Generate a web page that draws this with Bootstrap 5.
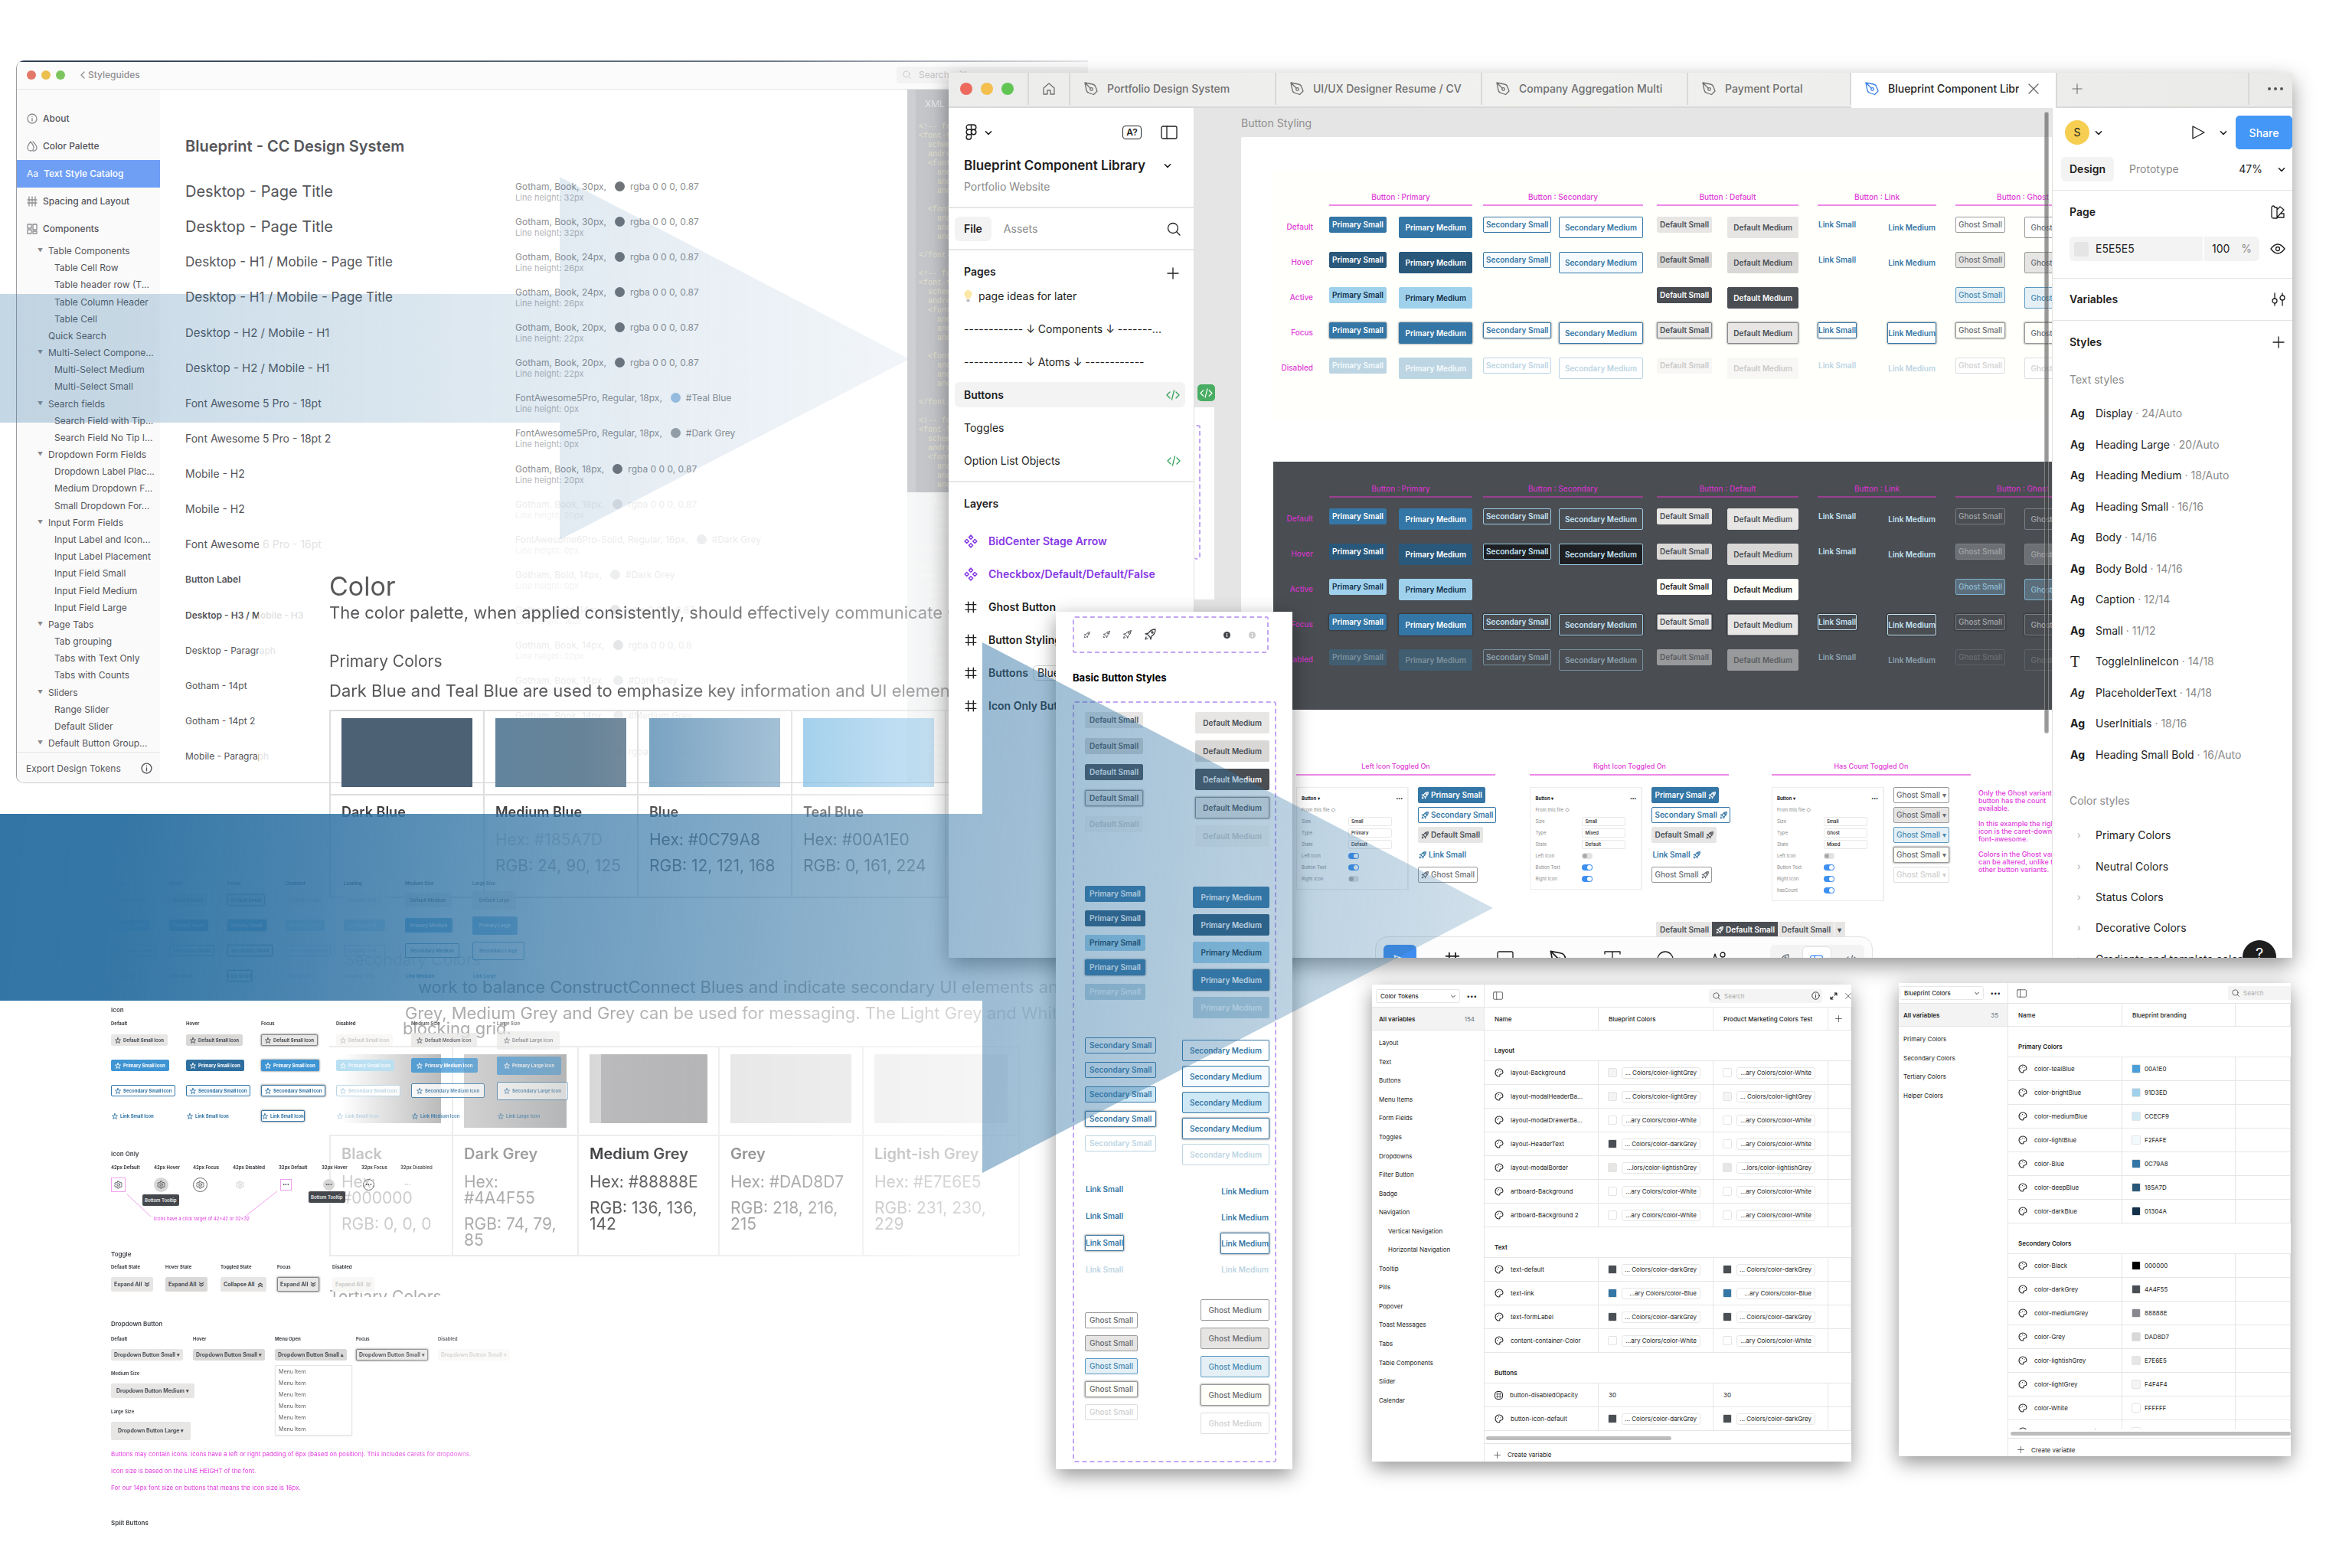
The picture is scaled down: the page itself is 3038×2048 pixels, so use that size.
<!DOCTYPE html>
<html lang="en">
<head>
<meta charset="utf-8">
<meta name="viewport" content="width=device-width, initial-scale=1">
<title>Blueprint Design System</title>
<link href="https://cdn.jsdelivr.net/npm/bootstrap@5.3.0/dist/css/bootstrap.min.css" rel="stylesheet">
<style>
body{font-family:Inter,"Noto Sans",sans-serif;font-size:14px;line-height:20px;color:#1e1e1e;background:#fff}
svg{display:block;flex:none}
.ic{fill:none;stroke:currentColor;stroke-width:1.3;stroke-linecap:round;stroke-linejoin:round}
.stage{position:relative;min-height:2048px;overflow:hidden}
.win{position:absolute;background:#fff}
.floaty{box-shadow:0 8px 24px rgba(0,0,0,.42)}
.nw{white-space:nowrap}
.fw-semi{font-weight:600}
a{color:inherit;text-decoration:none}
.light{border-radius:50%;flex:none}

/* style guide window */
.guide{left:21px;top:79px;width:1400px;height:944px;border-left:1px solid #9a9da1;border-bottom:1px solid #ccc;border-radius:10px 0 0 10px;overflow:hidden;color:#55555a}
.guide:before{content:"";position:absolute;inset:0 0 auto 0;height:2px;background:linear-gradient(90deg,#2c3e53,#6d7784 70%,#e5e7ea)}
.guide-bar{height:38px;background:#fbfbfb;border-bottom:1px solid #e4e4e4;padding:0 0 0 13px;font-size:12px;font-weight:500}
.guide-bar .light{width:12px;height:12px}
.guide-bar .lights{gap:7px}
.guide-search{width:250px;height:22px;background:#f3f3f3;color:#c2c2c2;font-size:12px;border-radius:3px}
.guide-search input{background:none;border:0;width:150px;font-size:12px;color:#c2c2c2}
.guide-search input::placeholder{color:#c4c4c4}
.side{width:187px;background:#fafafa;flex:none;padding-top:20px}
.side-main a{height:36px;padding-left:13px;gap:7px;font-size:12px;font-weight:500}
.side-main a svg{color:#8e8e92}
.side-main a.on{background:#6f9ff5;color:#fff}
.tree{height:665px}
.tree a{flex:1 1 0;display:flex;align-items:center;font-size:12px;padding-left:49px;white-space:nowrap}
.tree a.l1{padding-left:41px}
.tree a.par{padding-left:27px}
.tree a.par:before{content:"▼";font-size:7px;color:#8a8a8e;width:14px}
.export{border-top:1px solid #e6e6e6;height:42px;padding:0 10px 0 12px;font-size:12px}
.cat{padding:0 0 0 33px;flex:1}
.cat h1{font-size:20px;font-weight:600;line-height:26px;margin:61px 0 23px}
.cat-rows{height:784px}
.cat-row{flex:1 1 0;align-items:center;display:flex;white-space:nowrap}
.cat-row .nm{width:431px;flex:none}
.t20{font-size:20px}.t17{font-size:17px}.t15{font-size:15px}.t14{font-size:14px}.t12{font-size:12px}
.spec1{font-size:12px;line-height:15px;color:#8d8f93;gap:7px}
.spec1 i{width:13px;height:13px;border-radius:50%;background:#707378;margin-left:4px}
.spec1 i.teal{background:#a0c4e6}.spec1 i.dg{background:#9da2a6}
.spec2{font-size:11px;line-height:14px;color:#b4b6ba}
.code{width:236px;flex:none;background:linear-gradient(90deg,#cdcfd2 0,#cdcfd2 11px,#c4c6ca 11px,#bdbfc4);color:#e3e0cb;font:10px/12px "Liberation Mono",monospace;padding:9px 0 0 15px;white-space:pre}
.code h6{font:12px/20px Inter,sans-serif;color:#e9eaec;margin:0 0 14px 8px}
.veil{position:absolute;left:316px;top:564px;right:0;bottom:0;background:rgba(255,255,255,.82)}

/* colour documentation */
.doc{position:absolute;left:430px;top:741px;width:950px;height:953px;overflow:hidden;color:#58585b;font-size:22px;line-height:20px;white-space:nowrap;-webkit-mask-image:linear-gradient(90deg,#000 35%,rgba(0,0,0,.35));mask-image:linear-gradient(90deg,#000 35%,rgba(0,0,0,.35))}
.doc h2{font-size:34px;line-height:50px;font-weight:400;margin:0}
.doc h3{font-size:21px;line-height:30px;font-weight:400;margin:0}
.doc p{margin:0}
.doc table{border-collapse:collapse;white-space:normal;table-layout:fixed;font-size:21px}
.doc td{border:2px solid #dedede;padding:9px 14px;vertical-align:top}
.doc .greys td{border-color:#ececec}
.pal td{width:201px}
.sw{height:90px}
.doc .nmr b{display:block;font-size:18px;line-height:22px;font-weight:600;color:#3f3f42}
.doc .greys .nmr b{font-size:20px}
.pal .swr td{height:110px}.pal .nmr td{height:134px}
.pal .nmr b{margin:2px 0 13px}.pal .nmr p{line-height:24px;margin-bottom:10px;white-space:nowrap}
.greys .swr td{height:115px}.greys .nmr td{height:156px}
.greys .nmr b{margin:3px 0 15px}.greys .nmr p{line-height:21px;margin-bottom:13px}
.greys .nmr p:last-child{margin-bottom:0}
.f0{opacity:.22}.f1{opacity:.3}.f2{opacity:.5}.f3{opacity:.7}

/* button sheet */
.sheet{position:absolute;left:145px;top:1149px;width:620px;color:#3f4247;font-size:6px;line-height:10px;-webkit-mask-image:linear-gradient(90deg,#000 50%,rgba(0,0,0,.45));mask-image:linear-gradient(90deg,#000 50%,rgba(0,0,0,.45))}
.sheet h4{font-size:8px;line-height:12px;font-weight:600;margin:0}
.sheet .cols{display:grid;font-weight:700}
.c76{grid-template-columns:76px 76px 76px 76px 80px 88px 100px}
.c98{grid-template-columns:98px 98px 98px 98px 112px 110px}
.cio{grid-template-columns:56px 51px 52px 60px 56px 52px 51px 60px}
.c71{grid-template-columns:71px 72px 74px 72px 80px}
.c107{grid-template-columns:107px 107px 106px 107px 107px}
.r33{grid-auto-rows:33px;align-items:center;justify-items:start}
.pink{color:#e23ae0;font-size:8px;line-height:10px;margin:0;white-space:nowrap}
.iconly{position:relative;height:102px}
.iconly .cell{width:19px;height:34px;display:flex;align-items:center;justify-content:center}
.ring{width:19px;height:19px;border-radius:50%;display:flex;align-items:center;justify-content:center}
.ring.h{background:#d8d7d6}.ring.f{border:1px solid #666}.ring.sq{border:1px solid #f0a0ef;border-radius:0}.ring.d{opacity:.3}
.ring.sm{width:15px;height:15px}
.tip{position:absolute;background:#44474c;color:#fff;border-radius:2px;line-height:15px;padding:0 3px;font-weight:500}
.ddmenu{position:absolute;left:214px;top:21px;width:101px;background:#fff;border:1px solid #e4e4e4;padding:0 4px;line-height:15px;box-shadow:0 1px 2px rgba(0,0,0,.08);color:#777;font-weight:500;font-size:7px}

/* buttons */
.bt{--bs-btn-padding-x:3px;--bs-btn-padding-y:0px;--bs-btn-font-size:10px;--bs-btn-font-weight:600;--bs-btn-border-radius:2px;--bs-btn-line-height:19px;white-space:nowrap;display:inline-flex;align-items:center;justify-content:center;gap:3px;flex:none}
.bt.md{--bs-btn-padding-x:7px;--bs-btn-line-height:26px}
.bt svg{width:10px;height:10px;stroke-width:1.8}
.sheet .bt{--bs-btn-font-size:6px;--bs-btn-font-weight:700;--bs-btn-line-height:13px;--bs-btn-padding-x:4px}
.sheet .bt.md{--bs-btn-line-height:17px;--bs-btn-padding-x:6px}
.sheet .bt.lg{--bs-btn-line-height:22px;--bs-btn-padding-x:8px}
.sheet .big.bt,.sheet .big .bt{--bs-btn-font-size:7px}
.sheet .big .bt{--bs-btn-padding-x:3px}
.sheet .bt svg{width:8px;height:8px}
.k-pri{--bs-btn-bg:#3476a5;--bs-btn-color:#fff;--bs-btn-border-color:#3476a5}
.k-pri.s-h{--bs-btn-bg:#2a587b;--bs-btn-border-color:#2a587b}
.k-pri.s-a{--bs-btn-bg:#a0d1ec;--bs-btn-border-color:#a0d1ec;--bs-btn-color:#12304a}
.k-pri.s-d{--bs-btn-bg:#bdd5e2;--bs-btn-border-color:#bdd5e2;--bs-btn-color:#f4fafd}
.sheet .k-pri{--bs-btn-bg:#3f95d3;--bs-btn-border-color:#3f95d3}
.sheet .k-pri.s-h{--bs-btn-bg:#2f6f9f;--bs-btn-border-color:#2f6f9f}
.sheet .k-pri.s-d{--bs-btn-bg:#b8dff2;--bs-btn-border-color:#b8dff2}
.k-sec{--bs-btn-bg:#fff;--bs-btn-color:#3476a5;--bs-btn-border-color:#3476a5}
.k-sec.s-h{--bs-btn-bg:#f4faff}.k-sec.s-a{--bs-btn-bg:#cfe8f6}
.k-sec.s-d{--bs-btn-color:#bcd5e3;--bs-btn-border-color:#bcd5e3}
.k-def{--bs-btn-bg:#e7e6e5;--bs-btn-color:#4a4f55;--bs-btn-border-color:#e7e6e5}
.k-def.s-h{--bs-btn-bg:#dad8d7;--bs-btn-border-color:#dad8d7}
.k-def.s-a{--bs-btn-bg:#4a4d52;--bs-btn-border-color:#4a4d52;--bs-btn-color:#fff}
.k-def.s-f{--bs-btn-border-color:#85878b}
.k-def.s-d{--bs-btn-bg:#f8f7f5;--bs-btn-border-color:#f8f7f5;--bs-btn-color:#c9c9c9}
.k-lnk{--bs-btn-bg:transparent;--bs-btn-color:#3476a5;--bs-btn-border-color:transparent;--bs-btn-padding-x:0px!important}
.k-lnk.s-f{--bs-btn-border-color:#3476a5;--bs-btn-bg:#fff}
.k-lnk.s-d{--bs-btn-color:#bcd5e3}
.k-gho{--bs-btn-bg:#fff;--bs-btn-color:#6a6d72;--bs-btn-border-color:#999;--bs-btn-font-weight:500}
.k-gho.s-h{--bs-btn-bg:#e6e5e4}.k-gho.s-a{--bs-btn-bg:#e4f0f6;--bs-btn-color:#4a8ab3;--bs-btn-border-color:#5b9ac2}
.k-gho.s-f{--bs-btn-bg:#fffffa}.k-gho.s-d{--bs-btn-color:#cfcfcf;--bs-btn-border-color:#dedede}
.s-f{box-shadow:0 0 2px 1px rgba(0,0,0,.28)}
.night .k-sec{--bs-btn-bg:transparent;--bs-btn-color:#c5e3f3;--bs-btn-border-color:#9dcbe4}
.night .k-sec.s-h{--bs-btn-bg:#1d1f22}.night .k-sec.s-d{--bs-btn-color:#8da3b0;--bs-btn-border-color:#75909f}
.night .k-lnk{--bs-btn-color:#c5e3f3}.night .k-lnk.s-f{--bs-btn-bg:transparent;--bs-btn-border-color:#c5e3f3}
.night .k-lnk.s-d{--bs-btn-color:#8da3b0}
.night .k-pri.s-d{--bs-btn-bg:#415d70;--bs-btn-border-color:#415d70;--bs-btn-color:#7e919d}
.night .k-def.s-a{--bs-btn-bg:#fffffa;--bs-btn-border-color:#fffffa;--bs-btn-color:#222}
.night .k-def.s-d{--bs-btn-bg:#98999b;--bs-btn-border-color:#98999b;--bs-btn-color:#5a5d61}
.night .k-gho{--bs-btn-bg:transparent;--bs-btn-color:#a3a5a8;--bs-btn-border-color:#7b7e82}
.night .k-gho.s-h{--bs-btn-bg:#6d7074}.night .k-gho.s-a{--bs-btn-bg:#5b6e7b;--bs-btn-color:#8fbdd6;--bs-btn-border-color:#7fb2cf}
.night .k-gho.s-d{--bs-btn-color:#6a6d71;--bs-btn-border-color:#5e6165}

/* editor */
.editor{left:1239px;right:44px;top:95px;height:1156px;overflow:hidden;box-shadow:0 10px 26px rgba(0,0,0,.42)}
.tabs{height:46px;background:linear-gradient(90deg,#ececeb,#f1f1ef 45%,#eaeae8);border-bottom:2px solid #d9d9d9;color:#6f6f6f;font-weight:500}
.tabs>*{border-right:2px solid #d9d9d9;height:42px;flex:none}
.tabs .tb{width:269px;padding:0 14px 0 18px;gap:12px;overflow:hidden;white-space:nowrap}
.tabs .tb span{overflow:hidden}
.tabs .tb.pp{width:213px}
.tabs .tb.on{background:#fff;color:#1e1e1e;height:46px;padding-bottom:4px}
.tabs .cut{width:171px}
.lp{width:321px;flex:none;border-right:1px solid #e0e0e0;background:#fff}
.lp .ln{border-top:2px solid #e6e6e6}
.lp .it{height:43px;padding:0 17px 0 20px;white-space:nowrap}
.pill{background:#f3f3f3;border-radius:6px}
.tagbox{border:1px solid #d5d5d5;border-radius:5px;padding:0 5px;font-weight:400;margin-left:-8px;line-height:18px}
.canvas{background:#e5e5e5;position:relative;overflow:hidden;flex:1 1 0;min-width:0}
.frame{position:absolute;left:61px;top:38px;right:0;bottom:0;background:#fff;border-radius:3px 0 0 0;overflow:hidden}
.matrix{height:324px;margin-left:42px;padding-top:29px;overflow:hidden}
.day{background:#fffffc}
.night{background:#4a4d52}
.matrix .lab{width:52px;padding-top:22px;text-align:right;flex:none}
.matrix .lab span,.matrix .cap{color:#e03cd6;font-size:10px;font-weight:500}
.matrix.night .lab span,.matrix.night .cap{color:#cf35c6}
.matrix .lab span{display:block;height:46px;line-height:46px}
.grp{flex:none}
.cap{text-align:center;line-height:12px;border-bottom:2px solid #ee8ae6;padding-bottom:4px;margin-bottom:14px;white-space:nowrap}
.night .cap{border-color:#99408f}
.grp .rw{height:46px;display:flex;justify-content:space-between;align-items:flex-start}
.g1{width:187px;margin-left:21px}.g2{width:209px;margin-left:14px}.g3{width:185px;margin-left:18px}.g4{width:155px;margin-left:25px}.g5{width:176px;margin-left:25px}
.trio{padding:68px 0 0 72px}
.trio .cap{width:260px;color:#e03cd6;font-size:9px;font-weight:500;margin-bottom:15px}
.trio .stack{display:flex;flex-direction:column;gap:5px;align-items:flex-start}
.prop{width:146px;border:1px solid #ececec;padding:6px;font-size:6px;line-height:10px;color:#8b8b8b;flex:none;box-shadow:1px 0 1px rgba(0,0,0,.05)}
.prop>div{height:15px;display:flex;align-items:center}
.prop label{width:61px}
.prop select{appearance:none;border:1px solid #e8e8e8;border-radius:2px;width:57px;height:12px;font-size:6px;line-height:9px;padding:0 3px;background:#fff;color:#222;font-weight:500}
.prop .form-check-input{width:14px;height:8px;margin:0;min-height:0;border:0;background-color:#e3e3e3;background-size:contain}
.prop .form-check-input:checked{background-color:#3d8ff0}
.prop .form-switch{padding:0;min-height:0;margin:0;display:flex}
.split{position:absolute;left:603px;top:1063px}
.split .bt{border-radius:0;--bs-btn-line-height:19px;--bs-btn-padding-x:4px}
.toolb{position:absolute;left:236px;top:1082px;width:650px;height:60px;border-radius:16px;background:#fcfcfc;border:1px solid #e3e3e3;padding:10px}
.toolb .blue{width:43px;height:43px;background:#3f8df0;border-radius:6px;color:#fff}
.scrl{position:absolute;right:4px;top:5px;width:6px;height:812px;border-radius:3px;background:rgba(70,70,70,.55);border:1px solid rgba(255,255,255,.3)}
.rp{width:314px;flex:none;border-left:1px solid #e0e0e0;background:#fff}
.rp .sec{border-top:1px solid #e3e3e3;padding:0 16px 0 22px;font-weight:600}
.rp .sty{flex:1 1 0;display:flex;align-items:center;white-space:nowrap}
.rp .sty b{width:33px;font-weight:600}
.rp .mut{color:#8a8a8a}
.rp .stylist{height:486px;padding-left:23px}
.rp .clist{height:202px;padding-left:32px}
.rp .clist span{width:24px;color:#aaa;font-size:12px}
.help{position:absolute;right:21px;bottom:-21px;width:44px;height:44px;border-radius:50%;background:#1e1e1e;color:#fff;text-align:center;font-size:20px;line-height:36px}
.avatar{width:32px;height:32px;border-radius:50%;background:#f6ce52;text-align:center;line-height:32px}
.share{--bs-btn-bg:#4597f7;--bs-btn-color:#fff;--bs-btn-border-color:#4597f7;--bs-btn-font-size:14px;--bs-btn-font-weight:500;--bs-btn-padding-x:0px;--bs-btn-padding-y:0px;width:74px;height:44px;border-radius:5px}

/* basic buttons panel */
.basic{left:1379px;top:799px;width:309px;height:1120px;padding:6px 21px 0 22px}
.dash{border:2px dashed #c3a5f3;border-radius:3px}
.basic h5{font-size:13px;font-weight:700;line-height:20px;margin:22px 0 21px;color:#000}
.colm{display:flex;flex-direction:column}
.colm>div{display:flex;flex-direction:column}
.basic .bt{--bs-btn-padding-x:5px}.basic .bt.md{--bs-btn-padding-x:9px}
.L>div{align-items:flex-start}.R>div{align-items:flex-end}

/* variables panels */
.vars{font-size:8px;line-height:12px}
.vars .ic{stroke-width:1.1}
.vars .vh{border-bottom:1px solid #e6e6e6}
.vars .vs{flex:none;border-right:1px solid #e6e6e6}
.vars .av{background:#f3f3f3;border-bottom:1px solid #e6e6e6;font-weight:600;padding:0 12px 0 9px}
.vars select,.vars input{border:1px solid #e6e6e6;border-radius:3px;background:#fff;font-size:8px;height:18px;padding:0 5px;line-height:12px}
.pick{position:relative}
.pick select{appearance:none;width:110px}
.pick svg{position:absolute;right:5px;top:5px}
.vars input{background:#f4f4f4;border:0}
.vars input::placeholder{color:#aaa}
.vars .lst{padding:4px 9px 0}
.vars .lst a{flex:1 1 0;display:flex;align-items:center}
.vars table{border-collapse:separate;border-spacing:0;table-layout:fixed;width:100%}
.vars td,.vars th{height:31px;border-bottom:1px solid #e6e6e6;border-right:1px solid #e6e6e6;padding:0 0 0 13px;white-space:nowrap;font-weight:400;overflow:hidden}
.vars th{height:30px;font-weight:500}
.vars td.sct{height:40px;font-weight:600;vertical-align:bottom;padding-bottom:7px;border-right:0}
.vars .sq{width:12px;height:12px;border-radius:2px;border:1px solid #e4e4e4;flex:none}
.vars .al{border:1px solid #e6e6e6;border-radius:3px;width:103px;height:15px;line-height:13px;text-align:right;padding-right:4px}
.dots{font-size:8px}
.bar{height:5px;border-radius:3px;background:#bcbcbc}
.arrows{position:absolute;left:0;top:0;pointer-events:none}
</style>
</head>
<body>
<svg width="0" height="0" class="position-absolute" aria-hidden="true">
<symbol id="pen" viewBox="0 0 18 18"><path d="M1 1l10 2q3 .500 4 3.500l2 5.500-4.500 4.500-6-2q-3-1-3.500-3.500zM1 1l7 7"/><circle cx="9.500" cy="9.500" r="1.800"/></symbol>
<symbol id="home" viewBox="0 0 18 18"><path d="M2 8l7-6 7 6v8h-5v-5H7v5H2z"/></symbol>
<symbol id="fig" viewBox="0 0 16 20"><path d="M8 1H5a3 3 0 000 6h3zM8 1h3a3 3 0 010 6H8zM8 7H5a3 3 0 000 6h3zM8 13H5a3 3 0 103 3z"/><circle cx="11" cy="10" r="3"/></symbol>
<symbol id="chev" viewBox="0 0 10 10"><path d="M2 4l3 3 3-3"/></symbol>
<symbol id="pnl" viewBox="0 0 22 18"><rect x="1" y="1" width="20" height="16" rx="2"/><path d="M8 1v16"/></symbol>
<symbol id="mag" viewBox="0 0 18 18"><circle cx="8" cy="8" r="6.500"/><path d="M13 13l4 4"/></symbol>
<symbol id="plus" viewBox="0 0 16 16"><path d="M8 1v14M1 8h14"/></symbol>
<symbol id="dev" viewBox="0 0 18 14"><path d="M5 3L1 7l4 4M13 3l4 4-4 4M10.500 1l-3 12"/></symbol>
<symbol id="comp" viewBox="0 0 16 16"><path d="M8 1l2.300 2.300L8 5.600 5.700 3.300zM8 10.400l2.300 2.300L8 15l-2.300-2.300zM3.300 5.700L5.600 8l-2.300 2.300L1 8zM12.700 5.700L15 8l-2.300 2.300L10.400 8z"/></symbol>
<symbol id="hash" viewBox="0 0 16 16"><path d="M5 2v12M11 2v12M2 5h12M2 11h12"/></symbol>
<symbol id="star" viewBox="0 0 16 16"><path d="M8 1l2 5h5l-4 3.500L12.500 15 8 11.500 3.500 15 5 9.500 1 6h5z"/></symbol>
<symbol id="rkt" viewBox="0 0 16 16"><path d="M15 1q-6 0-9 5L2 7l3 1 3 3 1 3 1-4q5-3 5-9zM3 11l-1 3 3-1"/><circle cx="11" cy="5" r="1"/></symbol>
<symbol id="gear" viewBox="0 0 16 16"><circle cx="8" cy="8" r="2.500"/><path d="M6.500 1.500h3l.5 2 1.500.8 2-.6 1.500 2.600-1.500 1.700 1.500 1.700-1.500 2.600-2-.6-1.500.8-.5 2h-3l-.5-2-1.500-.8-2 .6L1 9.700 2.500 8 1 6.300l1.500-2.600 2 .6L6 3.500z"/></symbol>
<symbol id="pal" viewBox="0 0 12 12"><path d="M6 1a5 5 0 100 10c1.500 0 .5-1.500 1-2.500s3.500.2 4-2.500C11 3 9 1 6 1z"/><path d="M3.500 5.500v.1M5.500 3.500v.1M8 4.200v.1"/></symbol>
<symbol id="info" viewBox="0 0 14 14"><circle cx="7" cy="7" r="6"/><path d="M7 6.500v3.500M7 4v.2"/></symbol>
<symbol id="dbl" viewBox="0 0 12 12"><path d="M2 2l4 3 4-3M2 6l4 3 4-3"/></symbol>
<symbol id="dblup" viewBox="0 0 12 12"><path d="M2 6l4-3 4 3M2 10l4-3 4 3"/></symbol>
</svg>

<main class="stage">

<section class="win guide" aria-label="Style guide">
  <header class="guide-bar d-flex align-items-center">
    <div class="lights d-flex"><span class="light" style="background:#e27868"></span><span class="light" style="background:#ecc04f"></span><span class="light" style="background:#7cc55d"></span></div>
    <a href="#" class="d-flex align-items-center ms-3" style="color:#8e8e92"><svg class="ic" width="14" height="14" viewBox="0 0 14 14"><path d="M9 3L5 7l4 4"/></svg>Styleguides</a>
    <label class="guide-search d-flex align-items-center ms-auto px-2 gap-2"><svg class="ic" width="11" height="11"><use href="#mag"/></svg><input placeholder="Search with..." aria-label="Search"></label>
  </header>
  <div class="d-flex">
    <nav class="side">
      <div class="side-main">
        <a href="#" class="d-flex align-items-center"><svg class="ic" width="14" height="14"><use href="#info"/></svg>About</a>
        <a href="#" class="d-flex align-items-center"><svg class="ic" width="14" height="14" viewBox="0 0 14 14"><path d="M5 1Q1 6 1 9a4 4 0 008 0Q9 6 5 1zM8 1q5 5 5 8a4 4 0 01-5 4"/></svg>Color Palette</a>
        <a href="#" class="d-flex align-items-center on"><span style="font-weight:400">Aa</span>Text Style Catalog</a>
        <a href="#" class="d-flex align-items-center"><svg class="ic" width="14" height="14" viewBox="0 0 14 14"><path d="M3 1v12M7 1v12M11 1v12M1 5h12M1 9h12"/></svg>Spacing and Layout</a>
        <a href="#" class="d-flex align-items-center"><svg class="ic" width="14" height="14" viewBox="0 0 14 14"><path d="M1 1h5v5H1zM8 1h5v7H8zM1 8h5v5H1zM8 10h5v3H8z"/></svg>Components</a>
      </div>
      <div class="tree d-flex flex-column" id="tree"></div>
      <div class="export d-flex align-items-center justify-content-between">Export Design Tokens<svg class="ic" width="15" height="15"><use href="#info"/></svg></div>
    </nav>
    <div class="cat">
      <h1>Blueprint - CC Design System</h1>
      <div class="cat-rows d-flex flex-column" id="cat"></div>
    </div>
    <div class="code"><h6>XML</h6><span id="code"></span></div>
  </div>
  <div class="veil"></div>
</section>

<section class="doc">
  <h2>Color</h2>
  <p style="line-height:18px">The color palette, when applied consistently, should effectively communicate ConstructConnect</p>
  <h3 style="margin-top:40px">Primary Colors</h3>
  <p style="margin:13px 0 15px">Dark Blue and Teal Blue are used to emphasize key information and UI elements.</p>
  <table class="pal" style="width:1005px">
    <tr class="swr"><td><div class="sw" style="background:#4d6175"></div></td><td><div class="sw" style="background:linear-gradient(90deg,#62859d,#6a8396)"></div></td><td><div class="sw" style="background:linear-gradient(90deg,#6c9abc,#82a9c6)"></div></td><td><div class="sw" style="background:linear-gradient(90deg,#7dbce4,#94c8ea)"></div></td><td></td></tr>
    <tr class="nmr"><td><b>Dark Blue</b></td><td><b>Medium Blue</b><p class="f1">Hex: #185A7D</p><p class="f2">RGB: 24, 90, 125</p></td><td><b>Blue</b><p>Hex: #0C79A8</p><p>RGB: 12, 121, 168</p></td><td><b>Teal Blue</b><p>Hex: #00A1E0</p><p>RGB: 0, 161, 224</p></td><td></td></tr>
  </table>
  <h3 class="f0" style="margin-top:66px;padding-left:20px">Secondary Colors</h3>
  <p class="f3" style="margin-top:10px;padding-left:116px">work to balance ConstructConnect Blues and indicate secondary UI elements and</p>
  <p class="f2" style="margin-top:14px;padding-left:99px">Grey, Medium Grey and Grey can be used for messaging. The Light Grey and White</p>
  <p class="f2" style="margin-bottom:13px;padding-left:96px">blocking grid.</p>
  <table class="greys" style="width:900px">
    <colgroup><col style="width:160px"><col style="width:164px"><col style="width:184px"><col style="width:188px"><col style="width:204px"></colgroup>
    <tr class="swr"><td style="border-left-color:transparent"><div class="sw" style="background:linear-gradient(90deg,#fff,#bbb)"></div></td><td><div class="sw" style="background:linear-gradient(90deg,#d2d2d3,#b4b5b6);height:96px"></div></td><td><div class="sw" style="background:linear-gradient(90deg,#d8d8d9 15px,#b9b9bb 15px,#a6a6a8)"></div></td><td><div class="sw" style="background:#e3e2e2"></div></td><td><div class="sw" style="background:#e9e9e9"></div></td></tr>
    <tr class="nmr"><td><div class="f1"><b>Black</b><p>Hex: #000000</p><p>RGB: 0, 0, 0</p></div></td><td><div class="f2"><b>Dark Grey</b><p>Hex: #4A4F55</p><p>RGB: 74, 79, 85</p></div></td><td><b>Medium Grey</b><p>Hex: #88888E</p><p>RGB: 136, 136, 142</p></td><td><div class="f3"><b>Grey</b><p>Hex: #DAD8D7</p><p>RGB: 218, 216, 215</p></div></td><td><div class="f2"><b>Light-ish Grey</b><p>Hex: #E7E6E5</p><p>RGB: 231, 230, 229</p></div></td></tr>
  </table>
  <h3 class="f2" style="margin-top:38px">Tertiary Colors</h3>
</section>

<section class="sheet">
  <div class="cols c76"><span>Default</span><span>Hover</span><span>Focus</span><span>Disabled</span><span>Loading</span><span>Medium Size</span><span>Large Size</span></div>
  <div class="cols c76 r33" id="basicSheet"></div>
  <h4 style="margin:22px 0 7px">Icon</h4>
  <div class="cols c98"><span>Default</span><span>Hover</span><span>Focus</span><span>Disabled</span><span>Medium Size</span><span>Large Size</span></div>
  <div class="cols c98 r33" id="iconSheet"></div>
  <h4 style="margin:27px 0 7px">Icon Only</h4>
  <div class="cols cio nw"><span>42px Default</span><span>42px Hover</span><span>42px Focus</span><span>42px Disabled</span><span>32px Default</span><span>32px Hover</span><span>32px Focus</span><span>32px Disabled</span></div>
  <div class="iconly">
    <div class="cols cio" id="icoOnly"></div>
    <span class="tip" style="left:41px;top:30px">Bottom Tooltip</span><span class="tip" style="left:258px;top:26px">Bottom Tooltip</span>
    <svg class="position-absolute top-0 start-0" width="230" height="70" stroke="#f0a0ef" fill="none"><path d="M21 30L52 59M217 26L175 59"/></svg>
    <p class="pink position-absolute" style="left:56px;top:57px;font-size:6px">Icons have a click target of 42x42 or 32x32</p>
  </div>
  <h4 style="margin-bottom:6px">Toggle</h4>
  <div class="cols c71"><span>Default State</span><span>Hover State</span><span>Toggled State</span><span>Focus</span><span>Disabled</span></div>
  <div class="cols c71 big mt-2" id="tog"></div>
  <h4 style="margin:36px 0 9px">Dropdown Button</h4>
  <div class="cols c107"><span>Default</span><span>Hover</span><span>Menu Open</span><span>Focus</span><span>Disabled</span></div>
  <div class="cols c107 big position-relative mt-2" id="dd"></div>
  <div class="fw-semi" style="margin-top:12px">Medium Size</div>
  <button class="btn bt md k-def mt-2 big">Dropdown Button Medium ▾</button>
  <div class="fw-semi" style="margin-top:13px">Large Size</div>
  <button class="btn bt lg k-def mt-2 big">Dropdown Button Large ▾</button>
  <p class="pink" style="margin-top:13px">Buttons may contain icons. Icons have a left or right padding of 6px (based on position). This includes carets for dropdowns.</p>
  <p class="pink" style="margin-top:12px">Icon size is based on the LINE HEIGHT of the font.</p>
  <p class="pink" style="margin-top:12px">For our 14px font size on buttons that means the icon size is 16px.</p>
  <h4 style="margin-top:35px">Split Buttons</h4>
</section>

<section class="win editor">
  <header class="tabs d-flex">
    <div class="d-flex align-items-center" style="width:105px;padding-left:15px;gap:11px"><span class="light" style="width:16px;height:16px;background:#ec6a5e"></span><span class="light" style="width:16px;height:16px;background:#f4bf4f"></span><span class="light" style="width:16px;height:16px;background:#61c554"></span></div>
    <div class="d-flex align-items-center justify-content-center" style="width:54px"><svg class="ic" width="18" height="18"><use href="#home"/></svg></div>
    <a href="#" class="tb d-flex align-items-center"><svg class="ic" width="18" height="18"><use href="#pen"/></svg><span>Portfolio Design System</span></a>
    <a href="#" class="tb d-flex align-items-center"><svg class="ic" width="18" height="18"><use href="#pen"/></svg><span>UI/UX Designer Resume / CV</span></a>
    <a href="#" class="tb d-flex align-items-center"><svg class="ic" width="18" height="18"><use href="#pen"/></svg><span>Company Aggregation Multi</span></a>
    <a href="#" class="tb pp d-flex align-items-center"><svg class="ic" width="18" height="18"><use href="#pen"/></svg><span>Payment Portal</span></a>
    <a href="#" class="tb on d-flex align-items-center"><svg class="ic" width="18" height="18" style="color:#3b82e8"><use href="#pen"/></svg><span class="cut">Blueprint Component Library</span><svg class="ic" width="14" height="14" viewBox="0 0 14 14" style="color:#666"><path d="M1 1l12 12M13 1L1 13"/></svg></a>
    <div class="d-flex align-items-center flex-grow-1" style="padding-left:19px"><svg class="ic" width="14" height="14"><use href="#plus"/></svg></div>
    <div class="d-flex align-items-center justify-content-center border-0" style="width:56px;padding-left:12px"><svg width="22" height="4" fill="#555"><circle cx="3" cy="2" r="2"/><circle cx="11" cy="2" r="2"/><circle cx="19" cy="2" r="2"/></svg></div>
  </header>
  <div class="d-flex" style="height:1110px">
    <aside class="lp">
      <div class="d-flex align-items-center" style="padding:20px 21px 0"><svg class="ic" width="17" height="23"><use href="#fig"/></svg><svg class="ic ms-2" width="12" height="12"><use href="#chev"/></svg><span class="ms-auto border border-dark rounded-1 fw-semi" style="font-size:12px;line-height:16px;width:25px;text-align:center;margin-right:25px">A?</span><svg class="ic" width="22" height="18"><use href="#pnl"/></svg></div>
      <div class="d-flex align-items-center justify-content-between" style="padding:22px 28px 0 20px"><span class="fw-semi nw" style="font-size:17px">Blueprint Component Library</span><svg class="ic" width="12" height="12"><use href="#chev"/></svg></div>
      <div style="padding:8px 20px 16px;color:#8a8a8a">Portfolio Website</div>
      <div class="ln d-flex align-items-center" style="height:55px;padding:0 17px 0 8px"><a href="#" class="pill fw-semi" style="padding:6px 12px">File</a><a href="#" style="margin-left:16px;color:#8a8a8a">Assets</a><svg class="ic ms-auto" width="18" height="18"><use href="#mag"/></svg></div>
      <div class="ln d-flex align-items-end justify-content-between fw-semi" style="height:40px;padding:0 19px 0 20px">Pages<svg class="ic" width="16" height="16"><use href="#plus"/></svg></div>
      <div class="it d-flex align-items-center"><svg width="11" height="15" viewBox="0 0 11 15" class="me-2"><path d="M5.500 0a5 5 0 015 5c0 3-2 3-2.500 6h-5C2.500 8 .5 8 .5 5a5 5 0 015-5z" fill="#fbe7a6"/><path d="M3.500 12h4v3h-4z" fill="#bbb"/></svg>page ideas for later</div>
      <div class="it d-flex align-items-center">------------ ↓ Components ↓ -------...</div>
      <div class="it d-flex align-items-center">------------ ↓ Atoms ↓ ------------</div>
      <div class="it d-flex align-items-center"><span class="pill d-flex justify-content-between align-items-center fw-semi flex-grow-1" style="height:33px;margin:0 -6px 0 -12px;padding:0 7px 0 12px">Buttons<svg class="ic" width="18" height="14" style="color:#35a15a"><use href="#dev"/></svg></span></div>
      <div class="it d-flex align-items-center">Toggles</div>
      <div class="it d-flex align-items-center justify-content-between">Option List Objects<svg class="ic" width="18" height="14" style="color:#35a15a"><use href="#dev"/></svg></div>
      <div class="ln fw-semi" style="margin-top:5px;padding:18px 20px 17px">Layers</div>
      <div id="layers"></div>
    </aside>
    <div class="canvas">
      <div style="padding:10px 0 0 61px;color:#8f8f8f">Button Styling</div>
      <div class="position-absolute bg-white" style="left:0;top:391px;width:26px;height:251px"><div class="dash border-start-0" style="width:8px;height:176px;margin-top:23px"></div></div>
      <span class="position-absolute d-flex align-items-center justify-content-center text-white" style="left:4px;top:361px;width:23px;height:22px;background:#48ad62;border-radius:5px"><svg class="ic" width="17" height="13"><use href="#dev"/></svg></span>
      <div class="frame">
        <div class="matrix day d-flex" style="margin-top:43px;padding-top:29px" id="day"></div>
        <div class="matrix night d-flex" style="margin-top:57px" id="night"></div>
        <div class="trio d-flex" id="trio"></div>
      </div>
      <div class="split btn-group"><button class="btn bt k-def">Default Small</button><button class="btn bt k-def s-a"><svg class="ic"><use href="#rkt"/></svg>Default Small</button><button class="btn bt k-def">Default Small</button><button class="btn bt k-def" style="border-left-color:#fff">▾</button></div>
      <div class="toolb d-flex"><span class="blue d-flex align-items-center justify-content-center"><svg class="ic" width="22" height="22" viewBox="0 0 22 22"><path d="M3 3l16 6-7 3-3 7z"/></svg></span>
        <div class="d-flex align-items-center justify-content-around flex-grow-1" style="padding:0 12px;margin-right:22px">
        <svg class="ic" width="22" height="22"><use href="#hash"/></svg><svg class="ic" width="22" height="22" viewBox="0 0 22 22"><rect x="1" y="1" width="20" height="20" rx="2"/></svg><svg class="ic" width="24" height="24"><use href="#pen"/></svg><svg class="ic" width="22" height="22" viewBox="0 0 22 22"><path d="M1 4V1h20v3M11 1v20"/></svg><svg class="ic" width="22" height="22" viewBox="0 0 22 22"><circle cx="11" cy="11" r="10"/></svg><svg class="ic" width="22" height="22" viewBox="0 0 22 22"><path d="M2 20L7 4l5 16"/><circle cx="17" cy="5" r="3"/></svg></div>
        <div class="d-flex align-items-center justify-content-around pill" style="width:123px;height:40px"><svg class="ic text-secondary" width="16" height="16"><use href="#rkt"/></svg><span class="bg-white border rounded-2 d-flex align-items-center justify-content-center" style="width:38px;height:36px"><svg class="ic text-primary" width="17" height="15"><use href="#pnl"/></svg></span><svg class="ic text-secondary" width="18" height="14"><use href="#dev"/></svg></div>
      </div>
      <div class="scrl"></div>
    </div>
    <aside class="rp position-relative">
      <div class="d-flex align-items-center" style="padding:10px 0 10px 16px"><span class="avatar">S</span><svg class="ic" width="12" height="12" style="margin-left:6px"><use href="#chev"/></svg><svg class="ic ms-auto" width="18" height="20" viewBox="0 0 18 20"><path d="M2 2l15 8-15 8z"/></svg><svg class="ic" width="12" height="12" style="margin:0 10px 0 18px"><use href="#chev"/></svg><button class="btn share">Share</button></div>
      <div class="d-flex align-items-center" style="padding:0 8px 11px 11px"><a href="#" class="pill fw-semi" style="padding:6px 11px">Design</a><a href="#" class="mut" style="margin-left:20px">Prototype</a><span class="ms-auto">47%</span><svg class="ic" width="12" height="12" style="margin-left:19px"><use href="#chev"/></svg></div>
      <div class="sec" style="height:115px"><div class="d-flex justify-content-between align-items-center" style="padding:18px 0 22px">Page<svg class="ic" width="18" height="18" viewBox="0 0 18 18" style="margin-right:-6px"><path d="M1 3a2 2 0 014 0h3v14H3a2 2 0 01-2-2zM8 6l4-4 5 4-9 10h9v-5h-4"/></svg></div>
        <div class="d-flex align-items-center fw-normal"><div class="pill d-flex align-items-center" style="width:248px;height:32px"><span style="width:19px;height:19px;background:#e5e5e5;border-radius:3px;margin:0 9px 0 6px"></span>E5E5E5<span class="ms-auto border-start border-white border-2 d-flex align-items-center h-100" style="padding-left:10px;gap:15px;width:74px">100<span class="mut">%</span></span></div><svg class="ic ms-auto" width="20" height="14" viewBox="0 0 20 14" style="margin-right:-7px"><path d="M1 7q9-12 18 0-9 12-18 0z"/><circle cx="10" cy="7" r="2.500"/></svg></div></div>
      <div class="sec d-flex justify-content-between align-items-center" style="height:55px">Variables<svg class="ic" width="18" height="18" viewBox="0 0 18 18" style="margin-right:-7px"><circle cx="4" cy="11" r="3"/><path d="M4 1v7M4 14v3M14 10v7M14 1v3"/><circle cx="14" cy="7" r="3"/></svg></div>
      <div class="sec d-flex justify-content-between align-items-center" style="height:57px">Styles<svg class="ic" width="16" height="16" style="margin-right:-6px"><use href="#plus"/></svg></div>
      <div class="mut" style="padding:11px 22px 14px">Text styles</div>
      <div class="stylist d-flex flex-column" id="stylist"></div>
      <div class="mut" style="padding:30px 22px 15px">Color styles</div>
      <div class="clist d-flex flex-column" id="clist"></div>
      <span class="help">?</span>
    </aside>
  </div>
</section>

<section class="win floaty basic">
  <div class="dash d-flex align-items-center" style="height:48px;width:256px;padding:0 15px 0 12px;gap:16px;color:#3f4247"><svg class="ic" width="9" height="9"><use href="#rkt"/></svg><svg class="ic" width="10" height="10"><use href="#rkt"/></svg><svg class="ic" width="12" height="12"><use href="#rkt"/></svg><svg class="ic" width="16" height="16"><use href="#rkt"/></svg><svg class="ms-auto" width="9" height="9" viewBox="0 0 14 14"><circle cx="7" cy="7" r="7" fill="#3f4247"/><path d="M7 6v5M7 3v2" stroke="#fff" stroke-width="2"/></svg><svg width="9" height="9" viewBox="0 0 14 14" style="margin-left:8px"><circle cx="7" cy="7" r="7" fill="#ccc"/><path d="M7 6v5M7 3v2" stroke="#fff" stroke-width="2"/></svg></div>
  <h5>Basic Button Styles</h5>
  <div class="dash d-flex justify-content-between" style="height:994px;padding:12px 7px 0 14px"><div class="colm L" id="bl"></div><div class="colm R" id="br"></div></div>
</section>

<section class="win floaty vars d-flex flex-column" style="left:1792px;top:1286px;width:626px;height:623px">
  <div class="d-flex flex-grow-1" style="min-height:0">
    <div class="vs" style="width:147px">
      <div class="d-flex align-items-center vh" style="height:30px;padding:0 9px 0 5px"><span class="pick"><select aria-label="Collection"><option>Color Tokens</option></select><svg class="ic" width="8" height="8"><use href="#chev"/></svg></span><span class="ms-auto dots">•••</span></div>
      <div class="av d-flex align-items-center justify-content-between" style="height:30px">All variables<span class="fw-normal text-secondary">154</span></div>
      <div class="lst d-flex flex-column" style="height:495px" id="l1"></div>
    </div>
    <div class="flex-grow-1 d-flex flex-column overflow-hidden">
      <div class="vh d-flex align-items-center" style="height:30px;padding:0 0 0 11px;flex:none"><svg class="ic" width="13" height="11"><use href="#pnl"/></svg><label class="ms-auto d-flex align-items-center" style="background:#f4f4f4;width:148px;border-radius:3px;padding:0 3px 0 5px"><svg class="ic" width="10" height="10"><use href="#mag"/></svg><input placeholder="Search" class="flex-grow-1" style="width:90px"><svg class="ic" width="11" height="11"><use href="#info"/></svg></label><svg class="ic" width="10" height="10" viewBox="0 0 10 10" style="margin:0 10px"><path d="M6 1h3v3M9 1L6 4M4 9H1V6M1 9l3-3"/></svg><svg class="ic" width="8" height="8" viewBox="0 0 14 14"><path d="M1 1l12 12M13 1L1 13"/></svg></div>
      <div class="overflow-hidden flex-grow-1"><table id="t1"></table></div>
      <div style="padding:3px 0 4px 2px"><div class="bar" style="width:242px"></div></div>
      <div class="border-top d-flex align-items-center" style="height:24px;padding:5px 0 0 12px;gap:9px"><svg class="ic" width="9" height="9"><use href="#plus"/></svg>Create variable</div>
    </div>
  </div>
</section>

<section class="win floaty vars d-flex" style="left:2480px;top:1284px;width:512px;height:618px">
  <div class="vs" style="width:143px">
    <div class="d-flex align-items-center vh" style="height:27px;padding:0 9px 0 1px"><span class="pick"><select aria-label="Collection"><option>Blueprint Colors</option></select><svg class="ic" width="8" height="8"><use href="#chev"/></svg></span><span class="ms-auto dots">•••</span></div>
    <div class="av d-flex align-items-center justify-content-between" style="height:30px;padding-left:6px">All variables<span class="fw-normal text-secondary">35</span></div>
    <div class="lst d-flex flex-column" style="height:102px;padding-left:6px" id="l2"></div>
  </div>
  <div class="flex-grow-1 d-flex flex-column overflow-hidden">
    <div class="vh d-flex align-items-center" style="height:27px;padding:0 0 0 11px;flex:none"><svg class="ic" width="13" height="11"><use href="#pnl"/></svg><label class="ms-auto d-flex align-items-center" style="background:#f4f4f4;width:82px;padding-left:5px"><svg class="ic" width="10" height="10"><use href="#mag"/></svg><input placeholder="Search" style="width:60px"></label></div>
    <div class="overflow-hidden flex-grow-1"><table id="t2"></table></div>
    <div style="padding:3px 0 3px 3px"><div class="bar"></div></div>
    <div class="border-top d-flex align-items-center" style="height:24px;padding:6px 0 0 12px;gap:9px;flex:none"><svg class="ic" width="9" height="9"><use href="#plus"/></svg>Create variable</div>
  </div>
</section>

<svg class="arrows" width="1960" height="1560" aria-hidden="true">
  <defs>
    <linearGradient id="ga" gradientUnits="userSpaceOnUse" x1="0" y1="0" x2="1188" y2="0"><stop offset="0" stop-color="#3375a5" stop-opacity=".29"/><stop offset=".5" stop-color="#3375a5" stop-opacity=".17"/><stop offset="1" stop-color="#5a85b5" stop-opacity=".08"/></linearGradient>
    <linearGradient id="gb" gradientUnits="userSpaceOnUse" x1="0" y1="1100" x2="1950" y2="1300"><stop offset="0" stop-color="#3375a5"/><stop offset=".08" stop-color="#3375a5" stop-opacity=".99"/><stop offset=".2" stop-color="#3375a5" stop-opacity=".89"/><stop offset=".36" stop-color="#3375a5" stop-opacity=".73"/><stop offset=".51" stop-color="#3375a5" stop-opacity=".6"/><stop offset=".69" stop-color="#3375a5" stop-opacity=".46"/><stop offset="1" stop-color="#3375a5" stop-opacity=".22"/></linearGradient>
  </defs>
  <path fill="url(#ga)" d="M0 384H731V231L1188 469 731 705V552H0z"/>
  <path fill="url(#gb)" d="M0 1063H1283V839L1950 1186 1283 1532V1307H0z"/>
</svg>
</main>

<script src="https://cdn.jsdelivr.net/npm/bootstrap@5.3.0/dist/js/bootstrap.bundle.min.js"></script>
<script>
const $ = id => document.getElementById(id);
const put = (id, html) => { $(id).innerHTML = html; };
const use = (n, s = 16) => `<svg class="ic" width="${s}" height="${s}"><use href="#${n}"/></svg>`;

put('tree', [
 '>Table Components','Table Cell Row','Table header row (T...','Table Column Header','Table Cell','-Quick Search',
 '>Multi-Select Compone...','Multi-Select Medium','Multi-Select Small','>Search fields','Search Field with Tip...','Search Field No Tip I...',
 '>Dropdown Form Fields','Dropdown Label Plac...','Medium Dropdown F...','Small Dropdown For...','>Input Form Fields','Input Label and Icon...',
 'Input Label Placement','Input Field Small','Input Field Medium','Input Field Large','>Page Tabs','Tab grouping','Tabs with Text Only',
 'Tabs with Counts','>Sliders','Range Slider','Default Slider','>Default Button Group...'
].map(t => t[0] === '>' ? `<a href="#" class="par">${t.slice(1)}</a>` : t[0] === '-' ? `<a href="#" class="l1">${t.slice(1)}</a>` : `<a href="#">${t}</a>`).join(''));

const rgba = 'rgba 0 0 0, 0.87';
put('cat', [
 ['Desktop - Page Title','t20','Gotham, Book, 30px,',rgba,'','32px'],
 ['Desktop - Page Title','t20','Gotham, Book, 30px,',rgba,'','32px'],
 ['Desktop - H1 / Mobile - Page Title','t17','Gotham, Book, 24px,',rgba,'','26px'],
 ['Desktop - H1 / Mobile - Page Title','t17','Gotham, Book, 24px,',rgba,'','26px'],
 ['Desktop - H2 / Mobile - H1','t15','Gotham, Book, 20px,',rgba,'','22px'],
 ['Desktop - H2 / Mobile - H1','t15','Gotham, Book, 20px,',rgba,'','22px'],
 ['Font Awesome 5 Pro - 18pt','t14','FontAwesome5Pro, Regular, 18px,','#Teal Blue','teal','0px'],
 ['Font Awesome 5 Pro - 18pt 2','t14','FontAwesome5Pro, Regular, 18px,','#Dark Grey','dg','0px'],
 ['Mobile - H2','t14','Gotham, Book, 18px,',rgba,'','20px'],
 ['Mobile - H2','t14','Gotham, Book, 18px,',rgba,'','20px'],
 ['Font Awesome 6 Pro - 16pt','t14','FontAwesome6Pro-Solid, Regular, 16px,','#Dark Grey','dg','0px'],
 ['Button Label','t12 fw-semi','Gotham, Bold, 14px,','#Dark Grey','dg','0px'],
 ['Desktop - H3 / Mobile - H3','t12 fw-semi','Gotham, Bold, 14px,',rgba,'','16px'],
 ['Desktop - Paragraph','t12','Gotham, Book, 14px,','rgba 0 0 0, 0.8','','20px'],
 ['Gotham - 14pt','t12','Gotham, Book, 14px,','#Dark Grey','dg','0px'],
 ['Gotham - 14pt 2','t12','Gotham, Book, 14px,','#Medium Grey','dg','0px'],
 ['Mobile - Paragraph','t12','Gotham, Book, 14px,','rgba 0 0 0, 0.8','','18px']
].map(r => `<div class="cat-row"><span class="nm ${r[1]}">${r[0]}</span><div><div class="spec1 d-flex align-items-center">${r[2]}<i class="${r[4]}"></i>${r[3]}</div><div class="spec2">Line height: ${r[5]}</div></div></div>`).join(''));

const block = '&lt;!-- font family\n&lt;font-family\n  schemas:and\n  android:xml\n  &lt;font\n    android:\n    android:\n    android:\n\n  &lt;font\n    android:\n    android:\n    android:\n\n&lt;/font-family\n\n';
put('code', block.repeat(5));

/* button helpers */
const NAME = {pri:'Primary', sec:'Secondary', def:'Default', lnk:'Link', gho:'Ghost'};
const bt = (k, s, size, txt, pre = '', post = '') => `<button class="btn bt k-${k} s-${s} ${size}">${pre}${txt || NAME[k] + (size ? ' Medium' : ' Small')}${post}</button>`;
const ST = ['n','h','a','f','d'];
const matrix = () => '<div class="lab">' + ['Default','Hover','Active','Focus','Disabled'].map(t => `<span>${t}</span>`).join('') + '</div>' +
 ['pri','sec','def','lnk','gho'].map((k, i) => `<div class="grp g${i+1}"><div class="cap">Button : ${NAME[k]}</div>` +
  ST.map(s => `<div class="rw">${s === 'a' && (k === 'sec' || k === 'lnk') ? '' : bt(k, s, '') + bt(k, s, 'md')}</div>`).join('') + '</div>').join('');
put('day', matrix()); put('night', matrix());

/* toggled icon examples */
const sel = (l, v) => `<div><label>${l}</label><select aria-label="${l}"><option>${v}</option></select></div>`;
const sw = (l, on) => `<div><label>${l}</label><span class="form-switch"><input type="checkbox" role="switch" class="form-check-input" aria-label="${l}" ${on ? 'checked' : ''}></span></div>`;
const prop = (type, state, a, b, c, extra = '') => `<div class="prop"><div class="justify-content-between text-dark"><b>Button ▾</b><b>•••</b></div><div>From this file ◇</div>${sel('Size','Small')}${sel('Type',type)}${sel('State',state)}${sw('Left Icon',a)}${sw('Button Text',b)}${sw('Right Icon',c)}${extra}</div>`;
const rk = '<svg class="ic"><use href="#rkt"/></svg>';
const five = right => ['pri','sec','def','lnk','gho'].map(k => bt(k, 'n', '', NAME[k] + ' Small', right ? '' : rk, right ? rk : '')).join('');
const trio = (t, p, s, ml) => `<div style="margin-left:${ml}px"><div class="cap">${t}</div><div class="d-flex align-items-start" style="gap:13px">${p}<div class="stack">${s}</div></div></div>`;
put('trio',
 trio('Left Icon Toggled On', prop('Primary', 'Default', 1, 1, 0), five(false), 0) +
 trio('Right Icon Toggled On', prop('Mixed', 'Default', 0, 1, 1), five(true), 44) +
 trio('Has Count Toggled On', prop('Ghost', 'Mixed', 0, 1, 1, sw('hasCount', 1)), ST.map(s => bt('gho', s, '', 'Ghost Small ▾')).join(''), 54) +
 '<div class="pink" style="font-size:9px;padding:36px 0 0 10px;font-weight:500">Only the Ghost variant of the<br>button has the count<br>available.<br><br>In this example the right<br>icon is the caret-down in<br>font-awesome.<br><br>Colors in the Ghost variant<br>can be altered, unlike the<br>other button variants.</div>');

put('layers', [['comp','BidCenter Stage Arrow'],['comp','Checkbox/Default/Default/False'],['hash','Ghost Button'],['hash','Button Styling'],['hash','Buttons <span class="tagbox">Blueprint</span>'],['hash','Icon Only Buttons']]
 .map(([i, t]) => `<div class="it d-flex align-items-center fw-semi" style="gap:14px;color:${i === 'comp' ? '#8638e5' : '#1e1e1e'}">${use(i, 18)}${t}</div>`).join(''));

put('stylist', ['Display|24/Auto','Heading Large|20/Auto','Heading Medium|18/Auto','Heading Small|16/16','Body|14/16','Body Bold|14/16','Caption|12/14','Small|11/12','ToggleInlineIcon|14/18','PlaceholderText|14/18','UserInitials|18/16','Heading Small Bold|16/Auto']
 .map((t, i) => { const [a, b] = t.split('|'); const g = i === 8 ? '<span style="font:20px Liberation Serif,serif">T</span>' : i === 9 ? '<i>Ag</i>' : 'Ag';
  return `<div class="sty"><b ${[5,7,10,11].includes(i) ? 'class="fw-bold"' : ''}>${g}</b>${a}<span class="mut">&nbsp;· ${b}</span></div>`; }).join(''));
put('clist', ['Primary Colors','Neutral Colors','Status Colors','Decorative Colors','Gradients and template colors'].map(t => `<div class="sty"><span>›</span>${t}</div>`).join(''));

/* basic buttons panel: [kind, states, small gap, small top, medium gap, medium top] */
const G = [['def',ST,13,0,9,0],['pri',ST,11,70,8,52],['sec',ST,11,49,6,28],['lnk',['n','h','f','d'],14,39,6,20],['gho',ST,9,45,9,25]];
put('bl', G.map(g => `<div style="gap:${g[2]}px;margin-top:${g[3]}px">${g[1].map(s => bt(g[0], s, '')).join('')}</div>`).join(''));
put('br', G.map(g => `<div style="gap:${g[4]}px;margin-top:${g[5]}px">${g[1].map(s => bt(g[0], s, 'md')).join('')}</div>`).join(''));

/* variables tables */
put('l1', ['Layout','Text','Buttons','Menu Items','Form Fields','Toggles','Dropdowns','Filter Button','Badge','Navigation','>Vertical Navigation','>Horizontal Navigation','Tooltip','Pills','Popover','Toast Messages','Tabs','Table Components','Slider','Calendar']
 .map(t => t[0] === '>' ? `<a href="#" style="padding-left:12px">${t.slice(1)}</a>` : `<a href="#">${t}</a>`).join(''));
put('l2', ['Primary Colors','Secondary Colors','Tertiary Colors','Helper Colors'].map(t => `<a href="#">${t}</a>`).join(''));
const C = {lg:['#f4f4f4','... Colors/color-lightGrey'], w:['#fff','...ary Colors/color-White'], dg:['#4a4f55','... Colors/color-darkGrey'], lt:['#e7e6e5','...lors/color-lightishGrey'], b:['#3476a5','...ary Colors/color-Blue']};
const alias = c => `<td><div class="d-flex align-items-center" style="gap:6px;margin-left:-1px"><span class="sq" style="background:${C[c][0]}"></span><span class="al">${C[c][1]}</span></div></td>`;
const nm = (t, i) => `<td><div class="d-flex align-items-center" style="gap:9px">${i ? '<span class="border border-dark rounded-1"><svg class="ic" width="9" height="9"><use href="#hash"/></svg></span>' : use('pal', 12)}${t}</div></td>`;
put('t1', '<colgroup><col style="width:149px"><col style="width:150px"><col style="width:150px"><col></colgroup><thead><tr><th>Name</th><th>Blueprint Colors</th><th>Product Marketing Colors Test</th><th style="padding-left:9px">' + use('plus', 9) + '</th></tr></thead><tbody>' +
 [['Layout'],['layout-Background','lg','w'],['layout-modalHeaderBa...','lg','lg'],['layout-modalDrawerBa...','w','w'],['layout-HeaderText','dg','w'],['layout-modalBorder','lt','lt'],['artboard-Background','w','w'],['artboard-Background 2','w','w'],
  ['Text'],['text-default','dg','dg'],['text-link','b','b'],['text-formLabel','dg','dg'],['content-container-Color','w','w'],['Buttons'],['button-disabledOpacity',0,0],['button-icon-default','dg','dg']]
 .map(r => r.length === 1 ? `<tr><td class="sct" colspan="4">${r[0]}</td></tr>` : `<tr>${nm(r[0], r[1] === 0)}${r[1] === 0 ? '<td>30</td><td>30</td>' : alias(r[1]) + alias(r[2])}<td></td></tr>`).join('') + '</tbody>');
put('t2', '<colgroup><col style="width:149px"><col style="width:148px"><col></colgroup><thead><tr><th>Name</th><th>Blueprint branding</th><th></th></tr></thead><tbody>' +
 [['Primary Colors'],['color-tealBlue','00A1E0','#4a9fd8'],['color-brightBlue','91D3ED','#a0d1ec'],['color-mediumBlue','CCECF9','#d3eaf7'],['color-lightBlue','F2FAFE'],['color-Blue','0C79A8','#3476a5'],['color-deepBlue','185A7D','#2a587b'],['color-darkBlue','01304A','#12304a'],
  ['Secondary Colors'],['color-Black','000000'],['color-darkGrey','4A4F55'],['color-mediumGrey','88888E'],['color-Grey','DAD8D7'],['color-lightishGrey','E7E6E5'],['color-lightGrey','F4F4F4'],['color-White','FFFFFF'],['color-transparentWhite','FFFFFF']]
 .map(r => r.length === 1 ? `<tr><td class="sct" colspan="3">${r[0]}</td></tr>` : `<tr>${nm(r[0])}<td><div class="d-flex align-items-center" style="gap:5px;margin-left:-1px"><span class="sq" style="background:${r[2] || '#' + r[1]}"></span>${r[1]}</div></td><td></td></tr>`).join('') + '</tbody>');

/* button sheet */
const star = '<svg class="ic"><use href="#star"/></svg>';
put('basicSheet', ['def','pri','sec','lnk'].map(k => ['n','h','f','d'].map(s => bt(k, s, '')).join('') + bt(k, 'd', '', 'Loading Text...') + bt(k, 'n', 'md') + bt(k, 'n', 'lg', NAME[k] + ' Large')).join(''));
put('iconSheet', ['def','pri','sec','lnk'].map(k => ['n','h','f','d'].map(s => bt(k, s, '', NAME[k] + ' Small Icon', star)).join('') + bt(k, 'n', 'md', NAME[k] + ' Medium Icon', star) + bt(k, 'n', 'lg', NAME[k] + ' Large Icon', star)).join(''));
put('icoOnly', ['sq','h','f','d','sq sm','h sm','f sm','d sm'].map(c => `<span class="cell"><span class="ring ${c}">${c.includes('sm') ? '•••' : use('gear', 11)}</span></span>`).join(''));
const tg = (s, t, i = 'dbl') => `<span>${bt('def', s, 'md', t, '', use(i, 8))}</span>`;
put('tog', tg('n','Expand All') + tg('h','Expand All') + tg('n','Collapse All','dblup') + tg('f','Expand All') + tg('d','Expand All'));
put('dd', ['n','h','h','f','d'].map((s, i) => `<span>${bt('def', s, '', 'Dropdown Button Small ' + (i === 2 ? '▴' : '▾'))}</span>`).join('') + '<div class="ddmenu">' + '<div>Menu Item</div>'.repeat(6) + '</div>');
</script>
</body>
</html>
